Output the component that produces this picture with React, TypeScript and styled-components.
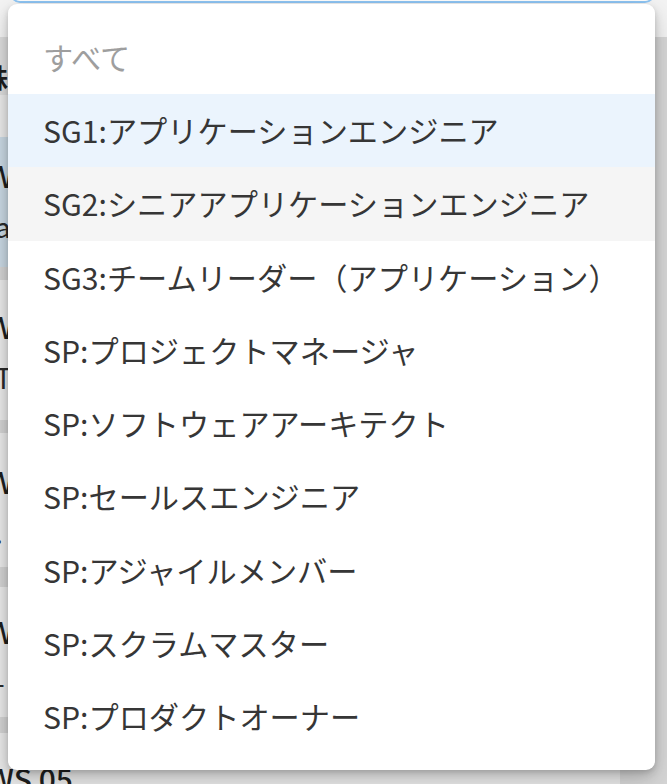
import React from "react";
import styled, { createGlobalStyle } from "styled-components";

const GlobalStyle = createGlobalStyle`
  html, body {
    margin: 0;
    padding: 0;
    width: 667px;
    height: 784px;
    overflow: hidden;
    background: #d6d6d6;
  }
  * { box-sizing: border-box; }
`;

const FONT = `"Noto Sans CJK JP", "Noto Sans", sans-serif`;

const Page = styled.div`
  position: relative;
  width: 667px;
  height: 784px;
  overflow: hidden;
  background: #d6d6d6;
  font-family: ${FONT};
`;

const TopBar = styled.div`
  height: 37px;
  background: #f3f3f3;
  display: flex;
  align-items: flex-start;
  padding: 0 12px 0 10px;
`;

const SelectField = styled.div`
  flex: 1;
  height: 44px;
  margin-top: -41px;
  border: 2px solid #8fc6f4;
  border-radius: 10px;
  background: #ffffff;
`;

const Table = styled.div`
  width: 640px;
  margin-left: -20px;
  display: flex;
  flex-direction: column;
`;

const HeaderRow = styled.div`
  height: 58px;
  background: #dcdcdc;
  display: flex;
  align-items: center;
  padding: 20px 0 0 2px;
  font-size: 26px;
  font-weight: 700;
  color: #1e1e1e;
`;

const Row = styled.div<{ $h: number; $selected?: boolean; $top?: number }>`
  flex: none;
  height: ${(p) => p.$h}px;
  background: ${(p) => (p.$selected ? "#c9d8e3" : "#e9e9e9")};
  display: flex;
  flex-direction: column;
  justify-content: flex-start;
  padding: ${(p) => p.$top ?? 0}px 0 0 7px;
  gap: 14px;
  overflow: hidden;
`;

const Gap = styled.div<{ $h: number }>`
  flex: none;
  height: ${(p) => p.$h}px;
  background: #d3d3d3;
`;

const RowTitle = styled.div`
  font-size: 30px;
  line-height: 38px;
  font-weight: 500;
  color: #1f1f1f;
  white-space: nowrap;
`;

const RowSub = styled.div`
  font-size: 28px;
  line-height: 36px;
  color: #2a2a2a;
  padding-left: 8px;
  white-space: nowrap;
`;

const Menu = styled.ul`
  position: absolute;
  top: 4px;
  left: 8px;
  width: 647px;
  margin: 0;
  padding: 16.7px 0;
  list-style: none;
  background: #ffffff;
  border-radius: 9px;
  box-shadow: 0 10px 26px rgba(0, 0, 0, 0.18), 0 4px 10px rgba(0, 0, 0, 0.14),
    0 2px 4px rgba(0, 0, 0, 0.08);
`;

const Option = styled.li<{ $state?: "placeholder" | "selected" | "hover" }>`
  height: 73.3px;
  display: flex;
  align-items: center;
  padding-left: 35px;
  font-family: ${FONT};
  font-size: 30.2px;
  line-height: 1.5;
  white-space: nowrap;
  color: ${(p) => (p.$state === "placeholder" ? "#9e9e9e" : "#363636")};
  background: ${(p) =>
    p.$state === "selected" ? "#ebf4fd" : p.$state === "hover" ? "#f5f5f5" : "transparent"};
`;

const options: { label: string; state?: "placeholder" | "selected" | "hover" }[] = [
  { label: "すべて", state: "placeholder" },
  { label: "SG1:アプリケーションエンジニア", state: "selected" },
  { label: "SG2:シニアアプリケーションエンジニア", state: "hover" },
  { label: "SG3:チームリーダー（アプリケーション）" },
  { label: "SP:プロジェクトマネージャ" },
  { label: "SP:ソフトウェアアーキテクト" },
  { label: "SP:セールスエンジニア" },
  { label: "SP:アジャイルメンバー" },
  { label: "SP:スクラムマスター" },
  { label: "SP:プロダクトオーナー" },
];

export default function App() {
  return (
    <Page>
      <GlobalStyle />
      <TopBar>
        <SelectField />
      </TopBar>
      <Table>
        <HeaderRow>株式</HeaderRow>
        <Row $h={42} />
        <Row $h={130} $selected $top={19}>
          <RowTitle>WS 01</RowTitle>
          <RowSub>aws</RowSub>
        </Row>
        <Gap $h={13} />
        <Row $h={140} $top={27}>
          <RowTitle>WS 02</RowTitle>
          <RowSub>Tech</RowSub>
        </Row>
        <Gap $h={13} />
        <Row $h={134} $top={29}>
          <RowTitle>WS 03</RowTitle>
          <RowSub>.</RowSub>
        </Row>
        <Gap $h={20} />
        <Row $h={130} $top={25}>
          <RowTitle>WS 04</RowTitle>
          <RowSub>-</RowSub>
        </Row>
        <Gap $h={16} />
        <Row $h={120} $top={26}>
          <RowTitle>WS 05</RowTitle>
        </Row>
      </Table>
      <Menu role="listbox">
        {options.map((o) => (
          <Option key={o.label} $state={o.state} role="option">
            {o.label}
          </Option>
        ))}
      </Menu>
    </Page>
  );
}
